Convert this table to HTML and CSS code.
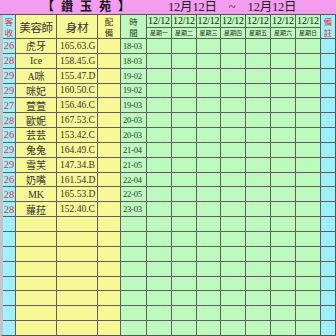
FILE: index.html
```html
<!DOCTYPE html>
<html>
<head>
<meta charset="utf-8">
<link rel="stylesheet" href="styles.css">
</head>
<body>
<div class="title">
  <span class="shop">【&nbsp;鑽&nbsp;玉&nbsp;苑&nbsp;】</span>
  <span class="dates"><span class="dt">12月12日</span><span class="tilde">~</span><span class="dt">12月12日</span></span>
</div>
<div class="sheet">
  <div class="c k h2 hs red">客<br>收</div>
  <div class="c y h2 hd">美容師</div>
  <div class="c y h2 hd">身材</div>
  <div class="c y h2 hs">配<br>備</div>
  <div class="c g h2 hs">時<br>間</div>
  <div class="c g dd">12/12</div><div class="c g dd">12/12</div><div class="c g dd">12/12</div><div class="c g dd">12/12</div><div class="c g dd">12/12</div><div class="c g dd">12/12</div><div class="c g dd">12/12</div>
  <div class="c k h2 hs red">備<br>註</div>
  <div class="c g wd">星期一</div><div class="c g wd">星期二</div><div class="c g wd">星期三</div><div class="c g wd">星期四</div><div class="c g wd">星期五</div><div class="c g wd">星期六</div><div class="c g wd">星期日</div>

  <div class="c k age">26</div><div class="c y nm">虎牙</div><div class="c y sz">165.63.G</div><div class="c y"></div><div class="c g tm">18-03</div><div class="c g"></div><div class="c g"></div><div class="c g"></div><div class="c g"></div><div class="c g"></div><div class="c g"></div><div class="c g"></div><div class="c k"></div>
  <div class="c k age">28</div><div class="c y nm">Ice</div><div class="c y sz">158.45.G</div><div class="c y"></div><div class="c g tm">18-03</div><div class="c g"></div><div class="c g"></div><div class="c g"></div><div class="c g"></div><div class="c g"></div><div class="c g"></div><div class="c g"></div><div class="c k"></div>
  <div class="c k age">29</div><div class="c y nm">A咪</div><div class="c y sz">155.47.D</div><div class="c y"></div><div class="c g tm">19-02</div><div class="c g"></div><div class="c g"></div><div class="c g"></div><div class="c g"></div><div class="c g"></div><div class="c g"></div><div class="c g"></div><div class="c k"></div>
  <div class="c k age">29</div><div class="c y nm">咪妃</div><div class="c y sz">160.50.C</div><div class="c y"></div><div class="c g tm">19-02</div><div class="c g"></div><div class="c g"></div><div class="c g"></div><div class="c g"></div><div class="c g"></div><div class="c g"></div><div class="c g"></div><div class="c k"></div>
  <div class="c k age">27</div><div class="c y nm">萱萱</div><div class="c y sz">156.46.C</div><div class="c y"></div><div class="c g tm">19-03</div><div class="c g"></div><div class="c g"></div><div class="c g"></div><div class="c g"></div><div class="c g"></div><div class="c g"></div><div class="c g"></div><div class="c k"></div>
  <div class="c k age">28</div><div class="c y nm">歐妮</div><div class="c y sz">167.53.C</div><div class="c y"></div><div class="c g tm">20-03</div><div class="c g"></div><div class="c g"></div><div class="c g"></div><div class="c g"></div><div class="c g"></div><div class="c g"></div><div class="c g"></div><div class="c k"></div>
  <div class="c k age">26</div><div class="c y nm">芸芸</div><div class="c y sz">153.42.C</div><div class="c y"></div><div class="c g tm">20-03</div><div class="c g"></div><div class="c g"></div><div class="c g"></div><div class="c g"></div><div class="c g"></div><div class="c g"></div><div class="c g"></div><div class="c k"></div>
  <div class="c k age">29</div><div class="c y nm">兔兔</div><div class="c y sz">164.49.C</div><div class="c y"></div><div class="c g tm">21-04</div><div class="c g"></div><div class="c g"></div><div class="c g"></div><div class="c g"></div><div class="c g"></div><div class="c g"></div><div class="c g"></div><div class="c k"></div>
  <div class="c k age">29</div><div class="c y nm">雪芙</div><div class="c y sz">147.34.B</div><div class="c y"></div><div class="c g tm">21-05</div><div class="c g"></div><div class="c g"></div><div class="c g"></div><div class="c g"></div><div class="c g"></div><div class="c g"></div><div class="c g"></div><div class="c k"></div>
  <div class="c k age">26</div><div class="c y nm">奶嘴</div><div class="c y sz">161.54.D</div><div class="c y"></div><div class="c g tm">22-04</div><div class="c g"></div><div class="c g"></div><div class="c g"></div><div class="c g"></div><div class="c g"></div><div class="c g"></div><div class="c g"></div><div class="c k"></div>
  <div class="c k age">28</div><div class="c y nm">MK</div><div class="c y sz">165.53.D</div><div class="c y"></div><div class="c g tm">22-05</div><div class="c g"></div><div class="c g"></div><div class="c g"></div><div class="c g"></div><div class="c g"></div><div class="c g"></div><div class="c g"></div><div class="c k"></div>
  <div class="c k age">28</div><div class="c y nm">蘿菈</div><div class="c y sz">152.40.C</div><div class="c y"></div><div class="c g tm">23-03</div><div class="c g"></div><div class="c g"></div><div class="c g"></div><div class="c g"></div><div class="c g"></div><div class="c g"></div><div class="c g"></div><div class="c k"></div>

  <div class="c k"></div><div class="c y"></div><div class="c y"></div><div class="c y"></div><div class="c g"></div><div class="c g"></div><div class="c g"></div><div class="c g"></div><div class="c g"></div><div class="c g"></div><div class="c g"></div><div class="c g"></div><div class="c k"></div>
  <div class="c k"></div><div class="c y"></div><div class="c y"></div><div class="c y"></div><div class="c g"></div><div class="c g"></div><div class="c g"></div><div class="c g"></div><div class="c g"></div><div class="c g"></div><div class="c g"></div><div class="c g"></div><div class="c k"></div>
  <div class="c k"></div><div class="c y"></div><div class="c y"></div><div class="c y"></div><div class="c g"></div><div class="c g"></div><div class="c g"></div><div class="c g"></div><div class="c g"></div><div class="c g"></div><div class="c g"></div><div class="c g"></div><div class="c k"></div>
  <div class="c k"></div><div class="c y"></div><div class="c y"></div><div class="c y"></div><div class="c g"></div><div class="c g"></div><div class="c g"></div><div class="c g"></div><div class="c g"></div><div class="c g"></div><div class="c g"></div><div class="c g"></div><div class="c k"></div>
  <div class="c k"></div><div class="c y"></div><div class="c y"></div><div class="c y"></div><div class="c g"></div><div class="c g"></div><div class="c g"></div><div class="c g"></div><div class="c g"></div><div class="c g"></div><div class="c g"></div><div class="c g"></div><div class="c k"></div>
  <div class="c k"></div><div class="c y"></div><div class="c y"></div><div class="c y"></div><div class="c g"></div><div class="c g"></div><div class="c g"></div><div class="c g"></div><div class="c g"></div><div class="c g"></div><div class="c g"></div><div class="c g"></div><div class="c k"></div>
  <div class="c k"></div><div class="c y"></div><div class="c y"></div><div class="c y"></div><div class="c g"></div><div class="c g"></div><div class="c g"></div><div class="c g"></div><div class="c g"></div><div class="c g"></div><div class="c g"></div><div class="c g"></div><div class="c k"></div>
  <div class="c k"></div><div class="c y"></div><div class="c y"></div><div class="c y"></div><div class="c g"></div><div class="c g"></div><div class="c g"></div><div class="c g"></div><div class="c g"></div><div class="c g"></div><div class="c g"></div><div class="c g"></div><div class="c k"></div>
</div>
</body>
</html>
```
FILE: styles.css
```css
html, body {
  margin: 0;
  padding: 0;
  width: 336px;
  height: 336px;
  overflow: hidden;
  background: #ffffff;
}
body {
  font-family: "Liberation Serif", "Noto Sans CJK TC", serif;
  color: #333;
}
.title {
  height: 14px;
  border-bottom: 1px solid #555;
  background: #f39cf0;
  display: flex;
  align-items: center;
  font-family: "Liberation Serif", "Noto Sans CJK TC", serif;
  font-size: 12px;
  line-height: 14px;
  color: #111;
}
.shop {
  padding-left: 42px;
  font-weight: bold;
  letter-spacing: 2px;
  width: 126px;
}
.dates {
  display: flex;
  gap: 12px;
  font-size: 12.5px;
  color: #222;
}
.dt { letter-spacing: -0.2px; }
.sheet {
  display: grid;
  grid-template-columns: 12px 40px 40px 22px 25px 24px 24px 23px 24px 24px 24px 24px 14px;
  grid-template-rows: 11.5px 10.5px repeat(20, 13.85px);
  gap: 1px;
  background: #5f5f5f;
  border-left: 3px solid #c4c4c4;
  border-right: 1px solid #555;
  border-bottom: 1px solid #555;
  height: 321px;
  box-sizing: border-box;
}
.c {
  display: flex;
  align-items: center;
  justify-content: center;
  overflow: hidden;
  white-space: nowrap;
}
.k { background: #9eefff; }
.y { background: #f8f896; }
.g { background: #bdfabd; }
.h2 { grid-row: span 2; }
.red { color: #e0303a; }
.hs {
  font-family: "Noto Sans CJK TC", sans-serif;
  font-size: 8.5px;
  line-height: 11px;
  text-align: center;
}
.hd {
  font-family: "Noto Sans CJK TC", sans-serif;
  font-size: 11.5px;
  letter-spacing: -0.3px;
}
.dd {
  font-size: 10px;
  letter-spacing: -0.2px;
  color: #222;
}
.wd {
  font-family: "Noto Sans CJK TC", sans-serif;
  font-size: 6px;
  color: #333;
}
.age {
  color: #e0303a;
  font-size: 10.5px;
}
.nm {
  font-family: "Liberation Serif", "Noto Sans CJK TC", serif;
  font-size: 10px;
}
.sz {
  font-size: 9.5px;
  justify-content: flex-start;
  padding-left: 3px;
}
.tm {
  font-size: 8.5px;
  letter-spacing: -0.2px;
  justify-content: flex-start;
  padding-left: 2px;
}
```
